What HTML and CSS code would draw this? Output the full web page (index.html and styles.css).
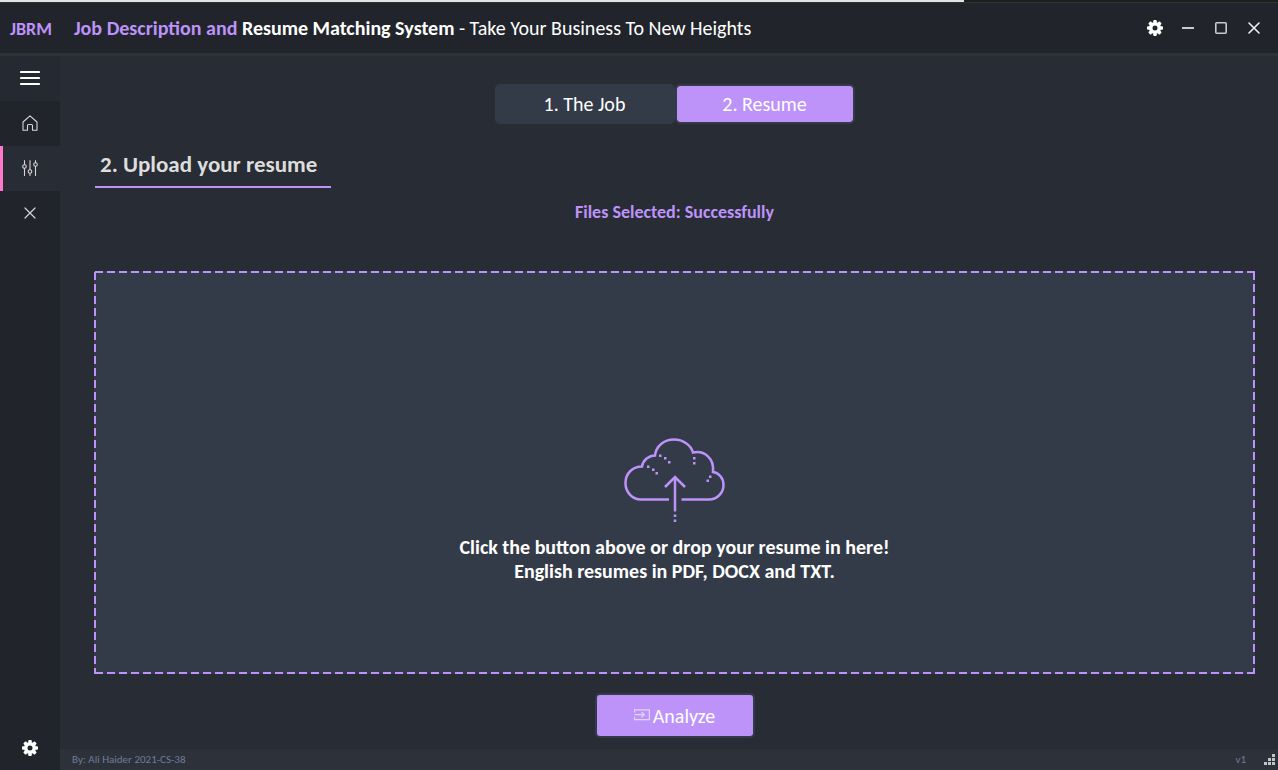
FILE: index.html
```html
<!DOCTYPE html>
<html lang="en">
<head>
<meta charset="utf-8">
<title>Job Description and Resume Matching System</title>
<link rel="stylesheet" href="styles.css">
</head>
<body>
<svg class="sprite" aria-hidden="true">
  <symbol id="gear" viewBox="0 0 16 16">
    <circle cx="8" cy="8" r="4.3" fill="none" stroke="currentColor" stroke-width="3.6"/>
    <g fill="currentColor">
      <rect x="6.2" y="0" width="3.6" height="3" rx="1"/>
      <rect x="6.2" y="0" width="3.6" height="3" rx="1" transform="rotate(45 8 8)"/>
      <rect x="6.2" y="0" width="3.6" height="3" rx="1" transform="rotate(90 8 8)"/>
      <rect x="6.2" y="0" width="3.6" height="3" rx="1" transform="rotate(135 8 8)"/>
      <rect x="6.2" y="0" width="3.6" height="3" rx="1" transform="rotate(180 8 8)"/>
      <rect x="6.2" y="0" width="3.6" height="3" rx="1" transform="rotate(225 8 8)"/>
      <rect x="6.2" y="0" width="3.6" height="3" rx="1" transform="rotate(270 8 8)"/>
      <rect x="6.2" y="0" width="3.6" height="3" rx="1" transform="rotate(315 8 8)"/>
    </g>
  </symbol>
</svg>
<div class="window">
  <div class="progress"><div class="progress-fill"></div></div>
  <header class="titlebar">
    <span class="brand">JBRM</span>
    <h1 class="title"><strong class="accent">Job Description and</strong> <strong>Resume Matching System</strong> - Take Your Business To New Heights</h1>
    <div class="window-controls">
      <button class="control" type="button" aria-label="Settings"><svg width="16" height="16"><use href="#gear"/></svg></button>
      <button class="control" type="button" aria-label="Minimize"><svg width="16" height="16" viewBox="0 0 16 16"><path d="M2 8H14" stroke="#c8cacc" stroke-width="2"/></svg></button>
      <button class="control" type="button" aria-label="Maximize"><svg width="16" height="16" viewBox="0 0 16 16"><rect x="2.8" y="2.8" width="10.4" height="10.4" rx="1" fill="none" stroke="#c8cacc" stroke-width="1.6"/></svg></button>
      <button class="control" type="button" aria-label="Close"><svg width="16" height="16" viewBox="0 0 16 16"><path d="M3 3L13 13M13 3L3 13" stroke="#eeeeee" stroke-width="1.6" stroke-linecap="round"/></svg></button>
    </div>
  </header>
  <div class="body">
    <nav class="sidebar" aria-label="Main">
      <button class="nav-item toggle" type="button" aria-label="Toggle menu"><svg width="20" height="16" viewBox="0 0 20 16"><path d="M1 2H19M1 8H19M1 14H19" stroke="#fff" stroke-width="2.2" stroke-linecap="round"/></svg></button>
      <button class="nav-item" type="button" aria-label="Home"><svg width="16" height="16" viewBox="0 0 16 16"><path d="M1 7L8 .8L15 7V15.2H10.5V10.5Q10.5 9.5 9.5 9.5H6.5Q5.5 9.5 5.5 10.5V15.2H1Z" fill="none" stroke="currentColor" stroke-width="1.1" stroke-linejoin="round"/></svg></button>
      <button class="nav-item active" type="button" aria-label="Job and resume"><svg width="16" height="16" viewBox="0 0 16 16"><g fill="none" stroke="currentColor" stroke-width="1.1" stroke-linecap="round"><path d="M2.5 .6V4.5M2.5 8.5V15.4M8 .6V9.5M8 13.5V15.4M13.5 .6V2.5M13.5 6.5V15.4"/><circle cx="2.5" cy="6.5" r="1.8"/><circle cx="8" cy="11.5" r="1.8"/><circle cx="13.5" cy="4.5" r="1.8"/></g></svg></button>
      <button class="nav-item" type="button" aria-label="Exit"><svg width="16" height="16" viewBox="0 0 16 16"><path d="M3 3L13 13M13 3L3 13" stroke="currentColor" stroke-width="1.2" stroke-linecap="round"/></svg></button>
      <button class="nav-item settings" type="button" aria-label="Settings panel"><svg width="16" height="16"><use href="#gear"/></svg></button>
    </nav>
    <div class="content">
      <main class="page">
        <div class="steps">
          <button class="step" type="button">1. The Job</button>
          <button class="step current" type="button">2. Resume</button>
        </div>
        <h2 class="heading">2. Upload your resume</h2>
        <p class="status">Files Selected: Successfully</p>
        <section class="dropzone">
          <svg width="102" height="86" viewBox="1 0 102 86">
            <g fill="none" stroke="#bd93f9" stroke-width="2.5">
              <path d="M46 61.5H18C9 61.5 2.5 54 2.5 45C2.5 35 10 28.5 19 28.5C20 22 26 17.5 32 17.5C33 8 41 1.500 51 1.500C60 1.500 68 7 70 14.500C81 12 91.500 20 90 34C96 35 100.500 40 100.500 47C100.500 55 94 61.500 86 61.500H58.500"/>
              <path d="M52 73.500V39.500M42 49L52 39L62 49"/>
            </g>
            <g fill="#bd93f9">
              <rect x="24" y="27.500" width="2.500" height="2.500"/><rect x="29" y="30.500" width="2.500" height="2.500"/><rect x="32.500" y="34" width="2.500" height="2.500"/>
              <rect x="36" y="16.500" width="2.500" height="2.500"/><rect x="41" y="19" width="2.500" height="2.500"/><rect x="45" y="23" width="2.500" height="2.500"/>
              <rect x="70" y="19" width="2.500" height="2.500"/><rect x="70" y="24" width="2.500" height="2.500"/>
              <rect x="86" y="37.500" width="2.500" height="2.500"/><rect x="83.500" y="41.500" width="2.500" height="2.500"/>
              <rect x="50.750" y="76.500" width="2.500" height="2.500"/><rect x="50.750" y="81.500" width="2.500" height="2.500"/>
            </g>
          </svg>
          <p class="hint">Click the button above or drop your resume in here!<br>English resumes in PDF, DOCX and TXT.</p>
        </section>
        <button class="analyze" type="button"><svg width="16" height="16" viewBox="0 0 16 16"><path d="M.6 4.500V1.800H15.400V11.700H.6V9M.6 6.700H10M7.500 4L10.200 6.700L7.500 9.400" fill="none" stroke="#e3d6f4" stroke-width="1.2"/></svg>Analyze</button>
      </main>
      <footer class="footer">
        <span>By: Ali Haider 2021-CS-38</span>
        <span class="version">v1</span>
        <svg width="11" height="11" viewBox="0 0 11 11" fill="#c4c4c4"><path d="M8 0h3v3H8zM4 4h3v3H4zM8 4h3v3H8zM0 8h3v3H0zM4 8h3v3H4zM8 8h3v3H8z"/></svg>
      </footer>
    </div>
  </div>
</div>
</body>
</html>
```
FILE: styles.css
```css
* { box-sizing: border-box; }

body {
  margin: 0;
  background: #282c34;
  color: #fff;
  font-family: Carlito, Lato, "Open Sans", sans-serif;
}

button {
  padding: 0;
  border: 0;
  background: none;
  color: inherit;
  font: inherit;
  cursor: pointer;
}

h1, h2, p { margin: 0; }
svg { display: block; }

.sprite { position: absolute; width: 0; height: 0; }

.window {
  display: flex;
  flex-direction: column;
  min-height: 100vh;
}

.progress { height: 3px; background: #1f1f1f; border-bottom: 1px solid #2c313a; }
.progress-fill { width: 75.4%; height: 2px; background: #e3e3e6; }

.titlebar {
  display: flex;
  align-items: center;
  height: 50px;
  padding-right: 10px;
  background: #21252b;
}

.brand {
  width: 60px;
  padding: 2px 0 0 10px;
  color: #bd93f9;
  font-size: 18px;
  font-weight: 700;
}

.title {
  flex: 1;
  padding-left: 14px;
  font-size: 20px;
  font-weight: 400;
}
.accent { color: #bd93f9; }

.window-controls { display: flex; gap: 5px; }
.control {
  display: grid;
  place-items: center;
  width: 28px;
  height: 28px;
}

.body {
  display: flex;
  flex: 1;
  border-top: 3px solid #2c313a;
}

.sidebar {
  display: flex;
  flex-direction: column;
  width: 60px;
  background: #21252b;
}
.nav-item {
  display: grid;
  place-items: center;
  height: 45px;
  padding-bottom: 2px;
  color: #d5d6d8;
}
.nav-item.toggle { background: #252931; }
.nav-item.active {
  background: #282c34;
  box-shadow: inset 3px 0 #ff79c6;
}
.nav-item.settings { margin-top: auto; padding-bottom: 0; color: #fff; }

.content {
  display: flex;
  flex: 1;
  flex-direction: column;
}

.page {
  display: flex;
  flex: 1;
  flex-direction: column;
  align-items: center;
  padding: 28px 23px 11px 34px;
}

.steps { display: flex; }
.step {
  width: 180px;
  height: 40px;
  border: 2px solid #343b48;
  border-radius: 5px;
  background: #343b48;
  font-size: 20px;
}
.step.current { background: #bd93f9; background-clip: padding-box; }

.heading {
  align-self: flex-start;
  margin: 20px 0 0 1px;
  padding: 0 14px 2px 5px;
  border-bottom: 2px solid #bd93f9;
  color: #dddddd;
  font-size: 23px;
  line-height: 40px;
}

.status {
  margin-top: 14px;
  color: #bd93f9;
  font-size: 18px;
  font-weight: 700;
  line-height: 20px;
}

.dropzone {
  --dash: transparent 0 1px, #bd93f9 1px 9px, transparent 9px 12px;
  --h: repeating-linear-gradient(90deg, var(--dash));
  --v: repeating-linear-gradient(180deg, var(--dash));
  display: flex;
  flex: 1;
  flex-direction: column;
  align-items: center;
  align-self: stretch;
  justify-content: center;
  gap: 11px;
  margin: 49px 0 19px;
  padding-top: 76px;
  background:
    var(--h) top / 100% 2px no-repeat,
    var(--h) bottom / 100% 2px no-repeat,
    var(--v) left / 2px 100% no-repeat,
    var(--v) right / 2px 100% no-repeat,
    #343b48;
}
.hint {
  font-size: 20px;
  font-weight: 700;
  line-height: 24px;
  text-align: center;
}

.analyze {
  display: flex;
  align-items: center;
  justify-content: center;
  gap: 3px;
  width: 160px;
  height: 45px;
  border: 2px solid #343b48;
  border-radius: 5px;
  background: #bd93f9;
  font-size: 20px;
}

.footer {
  display: flex;
  align-items: center;
  height: 21px;
  padding: 0 3px 0 12px;
  background: #2c313a;
  color: #717e95;
  font-size: 11px;
}
.version { margin-left: auto; margin-right: 18px; }
```
